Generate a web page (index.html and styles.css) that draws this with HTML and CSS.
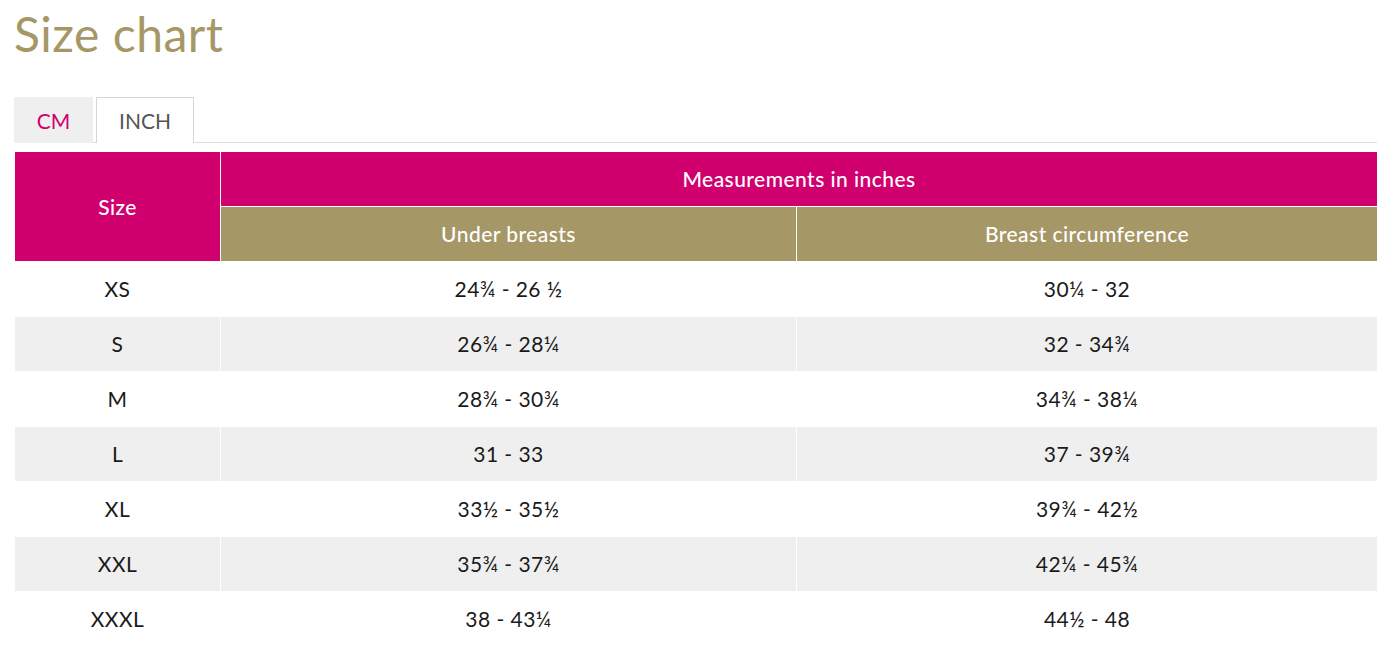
FILE: index.html
```html
<!DOCTYPE html>
<html lang="en">
<head>
<meta charset="utf-8">
<title>Size chart</title>
<link rel="stylesheet" href="styles.css">
</head>
<body>
<main class="page">
  <h1 class="title">Size chart</h1>
  <ul class="tabs">
    <li class="tab tab-cm">CM</li>
    <li class="tab tab-active">INCH</li>
  </ul>
  <table class="chart">
    <colgroup>
      <col class="col-size">
      <col class="col-under">
      <col class="col-breast">
    </colgroup>
    <thead>
      <tr>
        <th class="head-pink" rowspan="2">Size</th>
        <th class="head-pink" colspan="2">Measurements in inches</th>
      </tr>
      <tr>
        <th class="head-gold">Under breasts</th>
        <th class="head-gold">Breast circumference</th>
      </tr>
    </thead>
    <tbody>
      <tr><td>XS</td><td>24¾ - 26 ½</td><td>30¼ - 32</td></tr>
      <tr><td>S</td><td>26¾ - 28¼</td><td>32 - 34¾</td></tr>
      <tr><td>M</td><td>28¾ - 30¾</td><td>34¾ - 38¼</td></tr>
      <tr><td>L</td><td>31 - 33</td><td>37 - 39¾</td></tr>
      <tr><td>XL</td><td>33½ - 35½</td><td>39¾ - 42½</td></tr>
      <tr><td>XXL</td><td>35¾ - 37¾</td><td>42¼ - 45¾</td></tr>
      <tr><td>XXXL</td><td>38 - 43¼</td><td>44½ - 48</td></tr>
    </tbody>
  </table>
</main>
</body>
</html>
```
FILE: styles.css
```css
html, body {
  margin: 0;
  padding: 0;
  background: #ffffff;
}

body {
  font-family: Lato, "Open Sans", "Liberation Sans", sans-serif;
  color: #1a1a1a;
}

.page {
  padding: 5px 15px 0 14px;
}

.title {
  margin: 0;
  font-size: 48px;
  line-height: 1.2;
  font-weight: 400;
  letter-spacing: 0.5px;
  color: #a59766;
}

.tabs {
  list-style: none;
  margin: 34px 0 0 0;
  padding: 0;
  display: flex;
  gap: 3px;
  border-bottom: 1px solid #dddddd;
  height: 45px;
}

.tab {
  box-sizing: border-box;
  height: 46px;
  border: 1px solid transparent;
  border-bottom: 0;
  font-size: 21px;
  line-height: 45px;
  text-align: center;
}

.tab-cm {
  width: 79px;
  background: #efefef;
  color: #d0006f;
}

.tab-active {
  width: 98px;
  background: #ffffff;
  color: #555555;
  border-color: #d6d6d6;
}

.chart {
  margin-top: 8px;
  width: 1363px;
  border-collapse: collapse;
  table-layout: fixed;
  font-size: 21px;
  letter-spacing: 0.45px;
}

.col-size { width: 206px; }
.col-under { width: 576px; }
.col-breast { width: 581px; }

.chart th,
.chart td {
  border: 1px solid #ffffff;
  height: 54px;
  padding: 0;
  text-align: center;
  vertical-align: middle;
}

.chart th {
  color: #ffffff;
  font-weight: 500;
}

.head-pink { background: #d0006f; }
.head-gold { background: #a59766; }

.chart tbody tr:nth-child(even) td {
  background: #efefef;
}
```
